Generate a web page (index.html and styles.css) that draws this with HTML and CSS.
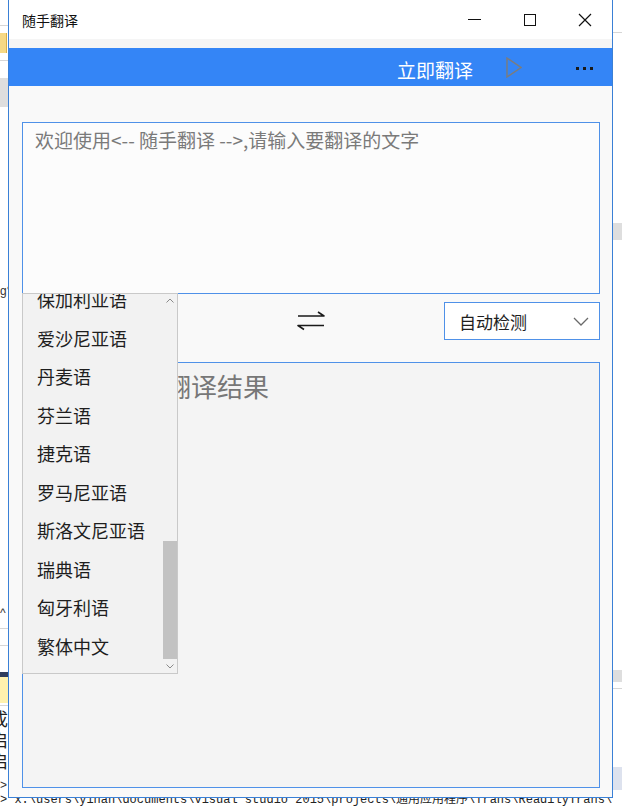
FILE: index.html
```html
<!DOCTYPE html>
<html lang="zh">
<head>
    <meta charset="UTF-8">
    <title>随手翻译</title>
    <link rel="stylesheet" href="styles.css">
</head>
<body>
    <!-- 桌面背景上露出的其他窗口 -->
    <div class="desktop">
        <div class="bit bit-line" style="top: 25px;"></div>
        <div class="bit bit-yellow" style="top: 33px; height: 20px;"></div>
        <div class="bit bit-line" style="top: 60px;"></div>
        <div class="bit bit-gray" style="top: 78px; height: 29px;"></div>
        <div class="bit-text" style="top: 284px;">g°</div>
        <div class="bit-text" style="top: 606px;">^</div>
        <div class="bit bit-line" style="top: 628px;"></div>
        <div class="bit bit-line" style="top: 645px;"></div>
        <div class="bit bit-navy" style="top: 672px;"></div>
        <div class="bit bit-pale" style="top: 677px; height: 26px;"></div>
        <div class="bit bit-line" style="top: 705px;"></div>
        <div class="bit-cjk" style="top: 708px;">成</div>
        <div class="bit-cjk" style="top: 729px;">启</div>
        <div class="bit-cjk" style="top: 750px;">启</div>
        <div class="bit-text" style="top: 778px;">&gt;</div>

        <div class="bit bit-right bit-line" style="top: 32px;"></div>
        <div class="bit bit-right bit-gray" style="top: 223px; height: 17px;"></div>
        <div class="bit bit-right bit-gray" style="top: 670px; height: 12px;"></div>
        <div class="bit bit-right bit-line" style="top: 688px;"></div>
        <div class="bit bit-right bit-lilac" style="top: 767px; height: 23px;"></div>

        <div class="desk-path">&gt; x:\users\yinan\documents\visual studio 2015\projects\通用应用程序\Trans\ReadilyTrans\</div>
    </div>

    <div class="window">
        <div class="titlebar">
            <span class="title">随手翻译</span>
            <div class="caption">
                <span class="cap-min"></span>
            </div>
            <div class="caption">
                <span class="cap-max"></span>
            </div>
            <div class="caption">
                <svg width="14" height="14" viewBox="0 0 14 14">
                    <path d="M1 1 L13 13 M13 1 L1 13" stroke="#111" stroke-width="1.2" fill="none"/>
                </svg>
            </div>
        </div>

        <div class="top-strip"></div>

        <div class="toolbar">
            <span class="translate-now">立即翻译</span>
            <svg class="play" width="16" height="21" viewBox="0 0 16 21">
                <polygon points="1,1 15,10.5 1,20" stroke="#7c7c7c" stroke-width="1.4" fill="none"/>
            </svg>
            <div class="more">
                <span></span><span></span><span></span>
            </div>
        </div>

        <div class="main">
            <div class="input-box">欢迎使用&lt;-- 随手翻译 --&gt;,请输入要翻译的文字</div>

            <div class="lang-row">
                <div class="combo">保加利亚语</div>
                <div class="swap">
                    <svg width="30" height="20" viewBox="0 0 30 20">
                        <path d="M2 5 H28 L22 1 M28 14.5 H2 L8 18.5" stroke="#1a1a1a" stroke-width="1.6" fill="none" stroke-linejoin="round"/>
                    </svg>
                </div>
                <div class="combo">
                    <span>自动检测</span>
                    <svg width="16" height="9" viewBox="0 0 16 9">
                        <polyline points="1,1 8,8 15,1" stroke="#6a6a6a" stroke-width="1.3" fill="none"/>
                    </svg>
                </div>
            </div>

            <div class="result-box">此处将显示翻译结果</div>
        </div>

        <!-- 源语言下拉列表（展开状态） -->
        <div class="popup">
            <div class="popup-list">
                <div class="popup-item">保加利亚语</div>
                <div class="popup-item">爱沙尼亚语</div>
                <div class="popup-item">丹麦语</div>
                <div class="popup-item">芬兰语</div>
                <div class="popup-item">捷克语</div>
                <div class="popup-item">罗马尼亚语</div>
                <div class="popup-item">斯洛文尼亚语</div>
                <div class="popup-item">瑞典语</div>
                <div class="popup-item">匈牙利语</div>
                <div class="popup-item">繁体中文</div>
            </div>
            <svg class="scroll-up" width="8" height="5" viewBox="0 0 8 5">
                <polyline points="0.5,4.5 4,1 7.5,4.5" stroke="#8a8a8a" stroke-width="1" fill="none"/>
            </svg>
            <div class="scroll-thumb"></div>
            <svg class="scroll-down" width="8" height="5" viewBox="0 0 8 5">
                <polyline points="0.5,0.5 4,4 7.5,0.5" stroke="#8a8a8a" stroke-width="1" fill="none"/>
            </svg>
        </div>
    </div>
</body>
</html>
```

FILE: styles.css
```css
body {
    margin: 0;
    width: 622px;
    height: 810px;
    position: relative;
    overflow: hidden;
    background: #fff;
    font-family: "Noto Sans CJK SC", "Microsoft YaHei", sans-serif;
}

/* desktop behind the window */
.desktop {
    position: absolute;
    inset: 0;
}
.bit {
    position: absolute;
    left: 0;
    width: 8px;
    height: 1px;
}
.bit-right {
    left: 613px;
    width: 9px;
}
.bit-line {
    background: #d6d6d6;
}
.bit-gray {
    background: #dedede;
}
.bit-yellow {
    width: 6px;
    background: #f6d985;
    border-right: 1px solid #d8b04a;
}
.bit-navy {
    height: 5px;
    background: #2f3d5c;
}
.bit-pale {
    background: #fff2ae;
}
.bit-lilac {
    background: #dde2ee;
}
.bit-text {
    position: absolute;
    left: 0;
    font-family: "Liberation Sans", sans-serif;
    font-size: 12px;
    color: #333;
}
.bit-cjk {
    position: absolute;
    left: -10px;
    font-size: 18px;
    line-height: 20px;
    color: #222;
}
.desk-path {
    position: absolute;
    left: 0;
    top: 793px;
    white-space: nowrap;
    font-family: "Liberation Mono", "Noto Sans CJK SC", monospace;
    font-size: 12px;
    line-height: 14px;
    color: #222;
}

/* window */
.window {
    position: absolute;
    left: 8px;
    top: 0;
    width: 603px;
    height: 797px;
    border: 1px solid #3a80d6;
    border-top: none;
    background: #f9f9f9;
    display: flex;
    flex-direction: column;
    z-index: 1;
}
.titlebar {
    height: 39px;
    background: #fff;
    display: flex;
    align-items: center;
}
.title {
    flex: 1;
    padding-left: 13px;
    font-size: 14px;
    color: #111;
}
.caption {
    width: 55px;
    height: 39px;
    display: flex;
    align-items: center;
    justify-content: center;
}
.cap-min {
    width: 13px;
    height: 1px;
    background: #111;
}
.cap-max {
    width: 10px;
    height: 10px;
    border: 1px solid #111;
}
.top-strip {
    height: 9px;
    background: #f5f5f5;
}
.toolbar {
    height: 38px;
    background: #3485f6;
    display: flex;
    align-items: center;
    justify-content: flex-end;
    padding-right: 19px;
}
.translate-now {
    font-size: 19px;
    color: #fff;
    margin-top: 4px;
}
.play {
    margin-left: 33px;
}
.more {
    margin-left: 54px;
    display: flex;
    gap: 4px;
    margin-top: 3px;
}
.more span {
    width: 3px;
    height: 3px;
    background: #1a1a1a;
}

.main {
    flex: 1;
    padding: 36px 12px 9px 13px;
    display: flex;
    flex-direction: column;
}
.input-box {
    height: 172px;
    box-sizing: border-box;
    border: 1px solid #4f91e8;
    background: #fcfcfc;
    padding: 4px 12px;
    font-size: 19px;
    line-height: 26px;
    color: #7a7a7a;
}
.lang-row {
    margin-top: 8px;
    height: 38px;
    display: grid;
    grid-template-columns: 156px 1fr 156px;
}
.combo {
    box-sizing: border-box;
    border: 1px solid #4f91e8;
    background: #fff;
    display: flex;
    align-items: center;
    justify-content: space-between;
    padding: 0 10px 0 14px;
    font-size: 17px;
    color: #1e1e1e;
}
.swap {
    display: flex;
    align-items: center;
    justify-content: center;
}
.result-box {
    flex: 1;
    margin-top: 22px;
    border: 1px solid #4f91e8;
    background: #f4f4f4;
    padding: 6px 12px;
    font-size: 26px;
    line-height: 34px;
    color: #777;
}

/* open dropdown */
.popup {
    position: absolute;
    left: 13px;
    top: 293px;
    width: 156px;
    height: 381px;
    box-sizing: border-box;
    border: 1px solid #c9c9c9;
    background: #f2f2f2;
    overflow: hidden;
}
.popup-list {
    margin-top: -14px;
}
.popup-item {
    height: 38.5px;
    display: flex;
    align-items: center;
    padding-left: 14px;
    font-size: 18px;
    color: #1e1e1e;
}
.scroll-up {
    position: absolute;
    right: 3px;
    top: 4px;
}
.scroll-thumb {
    position: absolute;
    right: 0;
    top: 247px;
    width: 14px;
    height: 118px;
    background: #c2c2c2;
}
.scroll-down {
    position: absolute;
    right: 3px;
    top: 370px;
}
```
